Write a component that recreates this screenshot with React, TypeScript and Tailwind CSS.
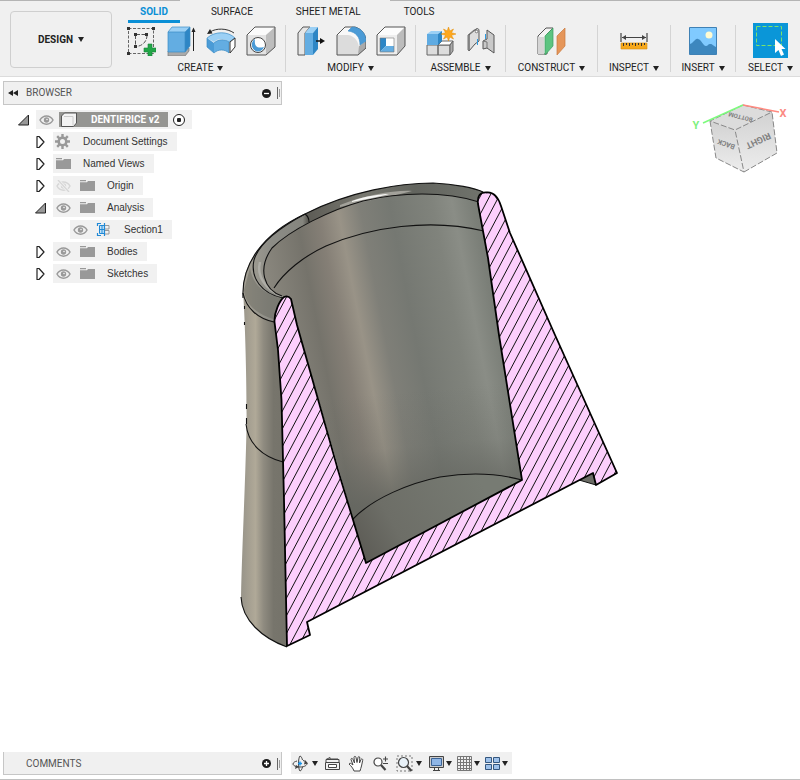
import type { ReactNode } from "react";

function Caret() {
  return (
    <svg width="6" height="5" viewBox="0 0 6 5" className="shrink-0" aria-hidden="true">
      <path d="M0 0h6L3 5z" fill="#222" />
    </svg>
  );
}

/* ---------- toolbar icons (30 x 30) ---------- */

function ToolIcon({ children }: { children: ReactNode }) {
  return (
    <svg width="30" height="30" viewBox="0 0 30 30" fill="none" strokeLinejoin="round" aria-hidden="true">
      {children}
    </svg>
  );
}

const icons = {
  sketch: (
    <ToolIcon>
      <path d="M2.500 2.500h25v25h-25z" stroke="#666" strokeDasharray="3 1.500" />
      <path d="M9.500 9v11M10 8.500h10M21 9c0 6-4 11-11 11.500" stroke="#555" strokeDasharray="4 1.500" />
      <path d="M1 1h3v3H1zM26 1h3v3h-3zM1 26h3v3H1zM8 7h3v3H8zM19 7h3v3h-3zM8 19h3v3H8z" fill="#333" />
      <path d="M22 18h4v4h4v4h-4v4h-4v-4h-4v-4h4z" fill="#22a547" stroke="#14843a" strokeWidth="0.6" />
    </ToolIcon>
  ),
  extrude: (
    <ToolIcon>
      <path d="M2 25l3-3h18v3l-4 5H2z" fill="#aaa" stroke="#777" strokeWidth="0.7" />
      <path d="M2 6l4-5h18l-5 5z" fill="#9bd0f5" />
      <path d="M2 6h17v20H2z" fill="#63ade2" />
      <path d="M19 6l5-5v19l-5 6z" fill="#2e86c5" />
      <path d="M2 6l4-5h18v19l-5 6H2zM2 6h17v20M19 6l5-5" stroke="#3b8cc6" strokeWidth="0.7" />
      <path d="M27.500 4v21" stroke="#222" />
      <path d="M25.500 6l2-4.500 2 4.500z" fill="#222" />
    </ToolIcon>
  ),
  revolve: (
    <ToolIcon>
      <path d="M1 12c8-7 21-7 28 0l-6 4c-4-4-11-4-15 0z" fill="#9bd0f5" />
      <path d="M1 12l7 5v10l-7-6z" fill="#4b9bd6" />
      <path d="M8 17c4-4 11-4 15-1v11c-4-4-11-4-15 0z" fill="#63ade2" />
      <path d="M1 12c8-7 21-7 28 0l-6 4v11c-4-4-11-4-15 0l-7-6zM8 17c4-4 11-4 15-1" stroke="#3b8cc6" strokeWidth="0.7" />
      <path d="M24 16l5-4v9l-5 6z" fill="#fff" stroke="#333" />
      <path d="M4 6c6-4 17-4 24 1" stroke="#333" />
      <path d="M1 8l3-5 2.500 4.500z" fill="#222" />
    </ToolIcon>
  ),
  hole: (
    <ToolIcon>
      <path d="M1 9l8-8h20l-9 8z" fill="#fbfbfb" />
      <path d="M1 9h19v20H1z" fill="#e3e3e3" />
      <path d="M20 9l9-8v20l-9 8z" fill="#bdbdbd" />
      <path d="M1 9l8-8h20v20l-9 8H1z" stroke="#555" />
      <circle cx="12" cy="19" r="7.500" fill="#fff" stroke="#444" />
      <path d="M9 13c-1 7 2 10 9 8-1 3-4 4.500-6.500 4.500C5 24.500 4 16 9 13z" fill="#4b9bd6" />
    </ToolIcon>
  ),
  pressPull: (
    <ToolIcon>
      <path d="M2 7l5-6h7l-5 6v22H2z" fill="#e6e6e6" stroke="#555" />
      <path d="M9 7l5-6h8l-5 6z" fill="#9bd0f5" />
      <path d="M9 7h8v22H9z" fill="#63ade2" />
      <path d="M17 7l5-6v22l-5 6z" fill="#2e86c5" />
      <path d="M20 15h5" stroke="#111" strokeWidth="1.500" />
      <path d="M24 12l5 3-5 3z" fill="#111" />
    </ToolIcon>
  ),
  fillet: (
    <ToolIcon>
      <path d="M1 9l8-8h10C26 3 30 9 30 15v7l-8 7H1z" fill="#f8f8f8" />
      <path d="M1 9h11c7 1 11 7 11 14v6H1z" fill="#dcdcdc" />
      <path d="M23 20l7-5v7l-8 7z" fill="#aaa" />
      <path d="M1 9l8-8h10c7 2 11 8 11 14v7l-8 7H1z" stroke="#555" />
      <path d="M12 5l4-4c9 0 14 7 14 14l-6 4c0-8-4-13-12-14z" fill="#4b9bd6" stroke="#3b8cc6" strokeWidth="0.6" />
    </ToolIcon>
  ),
  shell: (
    <ToolIcon>
      <path d="M1 9l8-8h20l-8 8z" fill="#fcfcfc" />
      <path d="M21 9l8-8v19l-8 9z" fill="#bcbcbc" />
      <path d="M1 9h20v20H1z" fill="#eee" />
      <path d="M1 9l8-8h20v19l-8 9H1z" stroke="#555" />
      <path d="M4 12h14v14H4z" fill="#fff" />
      <path d="M4 12h6v8l-6 6z" fill="#2e86c5" />
      <path d="M4 26l6-6h8v6z" fill="#63ade2" />
      <path d="M4 12h14v14H4z" stroke="#777" strokeWidth="0.6" />
    </ToolIcon>
  ),
  component: (
    <ToolIcon>
      <path d="M1 19h11v10H1zM12 19h12v10H12z" fill="#ddd" stroke="#666" />
      <path d="M12 19l4-4h11l-3 4z" fill="#fff" stroke="#666" />
      <path d="M24 19l3-4v10l-3 4z" fill="#aaa" stroke="#666" />
      <path d="M1 8l4-3h11l-4 3z" fill="#9bd0f5" />
      <path d="M1 8h11v11H1z" fill="#5fabe2" />
      <path d="M12 8l4-3v10l-4 4z" fill="#2e86c5" />
      <path
        d="M22.500 1l1.300 4 3.700-2-2 3.700 4.500 1.300-4.500 1.300 2 3.700-3.700-2-1.300 4-1.300-4-3.700 2 2-3.700-4.500-1.300 4.500-1.300-2-3.700 3.700 2z"
        fill="#ffa81e"
        stroke="#e38b00"
        strokeWidth="0.5"
      />
    </ToolIcon>
  ),
  joint: (
    <ToolIcon>
      <path d="M3 9l7-6c2-1 3 0 3 2v10l-4 3-6 7z" fill="#ddd" stroke="#555" />
      <path d="M3 9v16l-1-1V9l6-5h3" stroke="#777" />
      <circle cx="10.500" cy="5.500" r="1.300" fill="#fff" stroke="#555" strokeWidth="0.700" />
      <path d="M28 9l-7-5v9l-4 2v8l4-1 7 5z" fill="#c9c9c9" stroke="#555" />
      <path d="M17 15l4 1v6" stroke="#777" />
      <path d="M11.500 13v6M19.500 8v5" stroke="#2e9be0" />
    </ToolIcon>
  ),
  plane: (
    <ToolIcon>
      <path d="M1 10l8-8h7l-6 6v20H1z" fill="#f4f4f4" stroke="#555" />
      <path d="M1 11h6v17H1z" fill="#d5d5d5" />
      <path d="M8 10l8-8v18l-8 9z" fill="#5cc480" stroke="#3b9c5e" strokeWidth="0.700" />
      <path d="M20 10l8-8v18l-8 9z" fill="#e5965a" stroke="#c87a3d" strokeWidth="0.700" />
    </ToolIcon>
  ),
  measure: (
    <ToolIcon>
      <path d="M2 7v9M28 7v9M3 11.500h24" stroke="#444" strokeWidth="1.200" />
      <path d="M3 11.500l4-2.500v5zM27 11.500L23 9v5z" fill="#444" />
      <path d="M2 17h26v6H2z" fill="#f6a81c" stroke="#d98d0a" strokeWidth="0.600" />
      <path d="M4.500 17v3M7.500 17v2M10.500 17v3M13.500 17v2M16.500 17v3M19.500 17v2M22.500 17v3M25.500 17v2" stroke="#333" />
    </ToolIcon>
  ),
  insert: (
    <ToolIcon>
      <path d="M1.500 1.500h27v27h-27z" fill="#80caff" stroke="#3f81b5" />
      <path d="M2 18c4-1 5-6 8-5 4 1 5 7 8 7 2 0 2-2 4-2 3 0 3 2 6 3v7H2z" fill="#3d87be" />
      <circle cx="21" cy="9" r="3.500" fill="#fffbd2" />
    </ToolIcon>
  ),
  select: (
    <svg width="35" height="35" viewBox="0 0 35 35" fill="none" aria-hidden="true">
      <path d="M0 0h35v35H0z" fill="#0a96d8" />
      <path d="M3.500 3.500h25v19h-25z" stroke="#7be36a" strokeDasharray="4 2" />
      <path d="M22 16v14l3.500-3 2.500 6 3-1.500-2.500-5.500h4z" fill="#fff" />
    </svg>
  ),
};

interface ToolGroupProps {
  label: string;
  tools: { name: string; icon: ReactNode }[];
  className: string;
}

function ToolGroup({ label, tools, className }: ToolGroupProps) {
  return (
    <div className={`flex shrink-0 items-start ${className}`}>
      <div className="flex min-w-0 grow flex-col items-center gap-[2px]">
        <div className="flex h-[35px] items-center">
          {tools.map((tool) => (
            <button key={tool.name} type="button" aria-label={tool.name} className="flex w-10 items-center justify-center">
              {tool.icon}
            </button>
          ))}
        </div>
        <button type="button" className="flex h-4 items-center gap-1 whitespace-nowrap">
          {label}
          <Caret />
        </button>
      </div>
      <span className="mt-[2px] h-[47px] w-px bg-[#d4d4d4]" />
    </div>
  );
}

const tabs = ["SOLID", "SURFACE", "SHEET METAL", "TOOLS"];

function Ribbon() {
  return (
    <header className="overflow-hidden border-b border-[#dcdcdc] bg-[#f0f0f0]">
      <div className="flex h-px">
        <span className="w-[180px] bg-[#b4b4b4]" />
        <span className="w-[210px]" />
        <span className="grow bg-[#b4b4b4]" />
      </div>
      <div className="flex h-[75px]">
        <button
          type="button"
          className="mt-[10px] ml-[10px] flex h-[57px] w-[102px] shrink-0 items-center justify-center gap-[5px] rounded border border-[#cfcfcf] font-bold"
        >
          DESIGN
          <Caret />
        </button>
        <div className="flex flex-col">
          <nav className="ml-4 flex h-[22px] gap-[19px]">
            {tabs.map((tab, i) => (
              <button
                key={tab}
                type="button"
                className={
                  i === 0
                    ? "border-b-3 border-[#0a8fd6] px-3 pt-[3px] font-bold text-[#0a8fd6]"
                    : "border-b-3 border-transparent px-3 pt-[3px] whitespace-nowrap"
                }
              >
                {tab}
              </button>
            ))}
          </nav>
          <div className="ml-1 flex">
            <ToolGroup
              label="CREATE"
              className="w-[170px]"
              tools={[
                { name: "Create Sketch", icon: icons.sketch },
                { name: "Extrude", icon: icons.extrude },
                { name: "Revolve", icon: icons.revolve },
                { name: "Hole", icon: icons.hole },
              ]}
            />
            <ToolGroup
              label="MODIFY"
              className="w-[130px]"
              tools={[
                { name: "Press Pull", icon: icons.pressPull },
                { name: "Fillet", icon: icons.fillet },
                { name: "Shell", icon: icons.shell },
              ]}
            />
            <ToolGroup
              label="ASSEMBLE"
              className="w-[90px]"
              tools={[
                { name: "New Component", icon: icons.component },
                { name: "Joint", icon: icons.joint },
              ]}
            />
            <ToolGroup label="CONSTRUCT" className="w-[92px]" tools={[{ name: "Offset Plane", icon: icons.plane }]} />
            <ToolGroup label="INSPECT" className="w-[73px]" tools={[{ name: "Measure", icon: icons.measure }]} />
            <ToolGroup label="INSERT" className="w-[65px]" tools={[{ name: "Decal", icon: icons.insert }]} />
            <ToolGroup label="SELECT" className="w-[70px]" tools={[{ name: "Select", icon: icons.select }]} />
          </div>
        </div>
      </div>
    </header>
  );
}

/* ---------- browser tree ---------- */

function Eye({ off = false }: { off?: boolean }) {
  const color = off ? "#d6d6d6" : "#999";
  return (
    <svg width="15" height="12" viewBox="0 0 15 12" fill="none" aria-hidden="true">
      <path d="M1 6c3-5.500 10-5.500 13 0-3 5.500-10 5.500-13 0z" stroke={color} strokeWidth="1.500" />
      <circle cx="7.500" cy="6" r="2.700" fill={color} />
      <circle cx="8" cy="5.500" r="0.800" fill="#f1f1f1" />
      {off && <path d="M2 0l11 12" stroke="#f1f1f1" strokeWidth="3" />}
      {off && <path d="M2 0l11 12" stroke={color} strokeWidth="1.300" />}
    </svg>
  );
}

function Folder() {
  return (
    <svg width="16" height="13" viewBox="0 0 16 13" aria-hidden="true">
      <path d="M1 1h6v1.300H1zM1 3.300h7l1-1.300h7v10H1z" fill="#999" />
    </svg>
  );
}

function Gear() {
  return (
    <svg width="15" height="15" viewBox="0 0 15 15" fill="none" aria-hidden="true">
      <circle cx="7.500" cy="7.500" r="3.800" stroke="#999" strokeWidth="2.600" />
      <path
        d="M7.500 0v3M7.500 12v3M0 7.500h3M12 7.500h3M2.200 2.200l2.100 2.100M10.700 10.700l2.100 2.100M2.200 12.800l2.100-2.100M10.700 4.300l2.100-2.100"
        stroke="#999"
        strokeWidth="2.400"
      />
    </svg>
  );
}

function SectionIcon() {
  return (
    <svg width="15" height="15" viewBox="0 0 15 15" fill="none" aria-hidden="true">
      <path d="M3.500 3.500h5v8h-5zM3.500 7.500h5M6 3v9" fill="#c4e3f8" stroke="#2089d6" />
      <path d="M5 1.500H1.500V4M1.500 11v2.500H5M8.500 1v13" stroke="#2089d6" strokeWidth="1.200" />
      <path d="M9 3.500h4v3.500H9M9 8.500h4V12H9" stroke="#999" />
    </svg>
  );
}

function Expander({ open }: { open: boolean }) {
  return (
    <svg width="12" height="14" viewBox="0 0 12 14" aria-hidden="true">
      {open ? (
        <path d="M0.500 12L10.500 2v10z" fill="#999" stroke="#222" />
      ) : (
        <path d="M2 1.500v11h2l5-5.500-5-5.500z" fill="#fff" stroke="#222" strokeWidth="1.200" strokeLinejoin="round" />
      )}
    </svg>
  );
}

interface TreeNode {
  label: string;
  icon: ReactNode;
  open?: boolean;
  eye?: "on" | "off";
  leaf?: boolean;
}

const nodes: TreeNode[] = [
  { label: "Document Settings", icon: <Gear /> },
  { label: "Named Views", icon: <Folder /> },
  { label: "Origin", icon: <Folder />, eye: "off" },
  { label: "Analysis", icon: <Folder />, eye: "on", open: true },
  { label: "Section1", icon: <SectionIcon />, eye: "on", leaf: true },
  { label: "Bodies", icon: <Folder />, eye: "on" },
  { label: "Sketches", icon: <Folder />, eye: "on" },
];

function Grip() {
  return (
    <span className="flex items-center gap-px">
      <span className="h-3 w-px bg-[#666]" />
      <span className="h-2 w-px bg-[#999]" />
    </span>
  );
}

function RoundButton({ name, plus = false }: { name: string; plus?: boolean }) {
  return (
    <button type="button" aria-label={name}>
      <svg width="9" height="9" viewBox="0 0 9 9" aria-hidden="true">
        <circle cx="4.500" cy="4.500" r="4.500" fill="#1c1c1c" />
        <path d={plus ? "M2 4.500h5M4.500 2v5" : "M2 4.500h5"} stroke="#fff" strokeWidth="1.300" />
      </svg>
    </button>
  );
}

function BrowserPanel() {
  return (
    <aside className="col-start-1 row-start-1 ml-[3px] w-[279px] justify-self-start pt-1">
      <div className="flex h-6 items-center border border-[#c6c6c6] bg-[#f0f0f0] pr-px text-[#555]">
        <button type="button" aria-label="Collapse browser" className="w-[22px] pl-1">
          <svg width="10" height="6" viewBox="0 0 10 6" aria-hidden="true">
            <path d="M5 0v6L0 3zM10 0v6L5 3z" fill="#222" />
          </svg>
        </button>
        <h2 className="grow">BROWSER</h2>
        <span className="flex items-center gap-[6px]">
          <RoundButton name="Minimize browser" />
          <Grip />
        </span>
      </div>

      <ul className="mt-[5px] flex flex-col gap-[3px] font-['Liberation_Sans',Arial,sans-serif] text-[#333]">
        <li className="flex h-[19px] items-center pl-[15px]">
          <button type="button" aria-label="Collapse DENTIFRICE v2" className="w-[18px]">
            <Expander open />
          </button>
          <div className="flex h-full items-center gap-[5px] bg-[#f1f1f1] px-[3px]">
            <Eye />
            <span className="flex h-[15px] items-center bg-[#959592] pr-[9px] font-[Roboto,sans-serif] font-bold text-white">
              <svg width="20" height="15" viewBox="0 0 20 15" aria-hidden="true">
                <path d="M2.500 4l3-3h12v10l-3 3.500h-12z" fill="#f3f3f3" stroke="#555" />
                <path d="M5 4.500h9v9" stroke="#ccc" fill="none" />
              </svg>
              <span className="pl-3">DENTIFRICE v2</span>
            </span>
            <input
              type="radio"
              defaultChecked
              aria-label="Activate DENTIFRICE v2"
              className="mr-1 size-3 appearance-none rounded-full border border-[#222] bg-[radial-gradient(circle,#222_0_2px,#fff_2.5px)]"
            />
          </div>
        </li>
        {nodes.map((node) => (
          <li key={node.label} className={node.leaf ? "flex h-[19px] items-center pl-[67px]" : "flex h-[19px] items-center pl-8"}>
            {!node.leaf && (
              <button type="button" aria-label={`Toggle ${node.label}`} className="w-[18px]">
                <Expander open={!!node.open} />
              </button>
            )}
            <div className="flex h-full items-center bg-[#f1f1f1] pr-[9px]">
              {node.eye && (
                <span className="w-6 pl-[3px]">
                  <Eye off={node.eye === "off"} />
                </span>
              )}
              <span className="w-6 pl-[2px]">{node.icon}</span>
              <span className="pl-1.5">{node.label}</span>
            </div>
          </li>
        ))}
      </ul>
    </aside>
  );
}

/* ---------- canvas ---------- */

const SECTION =
  "M287 646L284 500L281.500 400L278 350L274.500 322C274 312 280 300 284 297Q288 295 291 299L297 325L338 470L366 563L522 480L499 335L488 258L478 204C477 196 480 192 487 192.500C494 192 498 197 501 206L510 233L555 335L617 473L596 485L593 473L307 622L310 635Z";

const INNER_WALL =
  "M282 296C264 290 257 269 272 248C290 230 330 210 363 201C400 192 445 191 479 202L522 481L366 563L297 325L291 299Z";

// hatch lines y = c - 1.89x, 17.7 apart vertically
const hatchLines = Array.from({ length: 48 }, (_, i) => {
  const c = 1139.4 + 17.7 * (i - 18);
  return `M${((c - 660) / 1.89).toFixed(1)} 660L${((c - 180) / 1.89).toFixed(1)} 180`;
}).join("");

function Model() {
  return (
    <svg
      viewBox="230 175 400 480"
      className="col-start-1 row-start-1 mt-[98px] ml-[60px] h-[480px] w-[400px] justify-self-center"
      fill="none"
      role="img"
      aria-label="Section view of the model"
    >
      <defs>
        <linearGradient id="inner" gradientUnits="userSpaceOnUse" x1="270" y1="300" x2="512" y2="253">
          <stop offset="0" stopColor="#8a877e" />
          <stop offset="0.170" stopColor="#75736b" />
          <stop offset="0.260" stopColor="#857f76" />
          <stop offset="0.340" stopColor="#999387" />
          <stop offset="0.430" stopColor="#7f7f78" />
          <stop offset="0.550" stopColor="#757872" />
          <stop offset="0.720" stopColor="#80837c" />
          <stop offset="0.800" stopColor="#8a8d86" />
          <stop offset="0.880" stopColor="#7b7f78" />
          <stop offset="1" stopColor="#6f726c" />
        </linearGradient>
        <linearGradient id="depth" gradientUnits="userSpaceOnUse" x1="420" y1="390" x2="430" y2="500">
          <stop offset="0" stopColor="#63655f" stopOpacity="0" />
          <stop offset="0.500" stopColor="#63655f" stopOpacity="0.200" />
          <stop offset="1" stopColor="#63655f" stopOpacity="0.850" />
        </linearGradient>
        <linearGradient id="outer" gradientUnits="userSpaceOnUse" x1="242" y1="0" x2="287" y2="0">
          <stop offset="0" stopColor="#99958a" />
          <stop offset="0.300" stopColor="#b0a998" />
          <stop offset="0.480" stopColor="#8f8b80" />
          <stop offset="0.700" stopColor="#77756c" />
          <stop offset="1" stopColor="#75736a" />
        </linearGradient>
        <linearGradient id="rim" gradientUnits="userSpaceOnUse" x1="243" y1="0" x2="482" y2="0">
          <stop offset="0" stopColor="#a5a195" />
          <stop offset="0.120" stopColor="#8c8c86" />
          <stop offset="0.250" stopColor="#85857e" />
          <stop offset="0.270" stopColor="#5d5c56" />
          <stop offset="0.500" stopColor="#77776f" />
          <stop offset="0.720" stopColor="#62645e" />
          <stop offset="1" stopColor="#70736c" />
        </linearGradient>
        <linearGradient id="floor" gradientUnits="userSpaceOnUse" x1="360" y1="550" x2="480" y2="480">
          <stop offset="0" stopColor="#5d5c56" />
          <stop offset="0.300" stopColor="#6d6e67" />
          <stop offset="1" stopColor="#777b73" />
        </linearGradient>
        <clipPath id="section">
          <path d={SECTION} />
        </clipPath>
      </defs>

      {/* outer wall */}
      <path
        d="M243 290C245 320 247 380 246.500 430C245 490 242 550 241 597C242 620 262 638 287 647L292 500L290 320L284 297L262 270Z"
        fill="url(#outer)"
      />
      {/* rim */}
      <path
        d="M243 292C242 262 265 233 305 214C350 191 400 183 433 183C455 184 475 188 484 192L479 203L470 300L284 298L275 322C255 316 244 306 243 292Z"
        fill="url(#rim)"
      />
      {/* rounded shading under the lip */}
      <path d="M250 268C253 286 265 294 283 299L276 320C256 314 245 304 244 290Z" fill="#64635c" opacity="0.450" />
      <path d="M260 262C256 276 266 290 282 296" stroke="#aeada6" strokeWidth="2.500" />
      {/* inner wall */}
      <path d={INNER_WALL} fill="url(#inner)" />
      <path d={INNER_WALL} fill="url(#depth)" />
      <path d="M340 205C365 195 395 190 412 191C395 196 368 200 340 207Z" fill="#a3a29b" />
      <path d="M352 201C366 196 380 194 389 194C380 197 365 199 352 202Z" fill="#f5f5f3" />
      {/* floor */}
      <path d="M353 519C373 498 410 483 440 477C470 472 500 474 522 480L366 563Z" fill="url(#floor)" />
      <path d="M579 480L593 472L596 485Z" fill="#6b6c65" stroke="#111" />

      <g stroke="#111" strokeWidth="1.100">
        <path d="M241 597C242 620 262 638 287 647" />
        <path d="M243 298C241 265 262 234 305 214C350 191 400 183 433 183C455 184 475 188 483 192" />
        <path d="M283 298C262 294 250 278 254 260C259 243 279 228 305 214" />
        <path d="M282 296C264 290 257 269 272 248C290 230 330 210 363 201C400 192 445 191 479 202" />
        <path d="M305 214C308 216 309 219 309 222" />
        <path d="M274 288C284 272 304 256 326 246C370 227 430 218 484 231" />
        <path d="M243 293C246 308 258 319 274 322" />
        <path d="M246 424C248 444 263 457 283 462" />
        <path d="M353 519C373 498 410 483 440 477C470 472 500 474 522 480" />
        <path d="M244.500 306v3M244.500 322v3M246.500 404v5M246.500 418v6" />
      </g>
      <path d={SECTION} fill="#fccffc" />
      <path d={hatchLines} clipPath="url(#section)" stroke="#111" />
      <path d={SECTION} stroke="#000" strokeWidth="1.800" strokeLinejoin="round" />
    </svg>
  );
}

function ViewCube() {
  return (
    <svg
      viewBox="690 98 104 80"
      className="col-start-1 row-start-1 mt-[21px] mr-[6px] h-[80px] w-[104px] justify-self-end"
      fill="none"
      role="img"
      aria-label="View cube"
    >
      <defs>
        <linearGradient id="face" x1="0" y1="0" x2="0" y2="1">
          <stop offset="0" stopColor="#d2d2d2" />
          <stop offset="1" stopColor="#ededed" />
        </linearGradient>
      </defs>
      <path d="M743 105L772 112L735 130L710 121Z" fill="#dcdcdc" />
      <path d="M710 121L735 130L744 172L716 158Z" fill="url(#face)" />
      <path d="M735 130L772 112L777 153L744 172Z" fill="url(#face)" />
      <path
        d="M743 105L772 112L735 130L710 121ZM710 121L716 158L744 172L735 130M744 172L777 153L772 112"
        stroke="#888"
        strokeDasharray="6 2"
      />
      <path d="M743 105L703 123" stroke="#7dfb7d" strokeWidth="1.500" />
      <path d="M743 105L779 112" stroke="#ff8a80" strokeWidth="1.500" />
      <g fontFamily="Roboto, sans-serif" fontWeight="bold" textAnchor="middle">
        <text x="696" y="129" fontSize="11" fill="#7df07d">Y</text>
        <text x="783" y="117" fontSize="11" fill="#fb8a84">X</text>
        <g fill="#808080">
          <text transform="translate(757 138) rotate(155)" fontSize="9">RIGHT</text>
          <text transform="translate(727 142) rotate(200)" fontSize="7">BACK</text>
          <text transform="translate(741 115) rotate(-166)" fontSize="6">BOTTOM</text>
        </g>
      </g>
    </svg>
  );
}

/* ---------- bottom bar ---------- */

function NavIcon({ children }: { children: ReactNode }) {
  return (
    <svg width="17" height="17" viewBox="0 0 17 17" fill="none" stroke="#444" className="shrink-0" aria-hidden="true">
      {children}
    </svg>
  );
}

const navTools = [
  {
    name: "Orbit",
    menu: true,
    className: "w-7 gap-[3px]",
    icon: (
      <NavIcon>
        <path d="M5 6C3 6.500 1 7.500 1 9c0 1.500 3 3 7 3 5 0 7-2 7-3.500S13 6 11 5.500M8 1C6 3 6 14 8 16c1 0 2-2 2.500-4M8 1c1 0 2 2 2.500 4" />
        <path d="M13 5l3 3.500-4 1zM3 14l1-4 3 2z" fill="#444" stroke="none" />
        <path d="M8 6.500v4M6 8.500h4" stroke="#1993e8" strokeWidth="1.500" />
      </NavIcon>
    ),
  },
  {
    name: "Look At",
    className: "w-6 pl-1",
    icon: (
      <NavIcon>
        <path d="M1.500 7.500h14v7h-14zM2 7V4.500h13V7" />
        <path d="M4.500 9.500h8v3h-8z" fill="#fff" />
        <path d="M2 4.500l4-2v1.500h8" />
      </NavIcon>
    ),
  },
  {
    name: "Pan",
    className: "w-6 pl-1",
    icon: (
      <NavIcon>
        <path
          d="M6 16c-1-3-3-5-5-7 1-1.500 2-.500 4 1L3 4.500c0-1.500 1.500-1.500 2 0L6.500 8 6 2.500c0-1.500 1.800-1.500 2 0L9 7.500l1-5c.300-1.500 2-1 1.800.500L11.500 8l1.500-3.500c.700-1.200 2-.500 1.700.800L13.500 11c-.500 2-1 3-1.500 5z"
          fill="#fff"
        />
      </NavIcon>
    ),
  },
  {
    name: "Zoom",
    className: "w-6 pl-1",
    icon: (
      <NavIcon>
        <circle cx="6" cy="7" r="4" fill="#fff" strokeWidth="1.200" />
        <path d="M9 10l4.500 5" strokeWidth="2.200" />
        <path d="M11 4h5M13.500 1.500v5M11 8.500h5" strokeWidth="1.100" />
      </NavIcon>
    ),
  },
  {
    name: "Zoom Window",
    menu: true,
    className: "w-8 gap-[3px] pl-1",
    icon: (
      <NavIcon>
        <path d="M1 1h15v15H1z" strokeDasharray="2 2" stroke="#777" />
        <circle cx="7.500" cy="7.500" r="5" fill="#e8f1f8" strokeWidth="1.200" />
        <path d="M11 11l4.500 5" strokeWidth="2.200" />
      </NavIcon>
    ),
  },
  {
    name: "Display Settings",
    menu: true,
    className: "w-7 justify-end gap-px",
    icon: (
      <NavIcon>
        <path d="M1.500 1.500h14v11h-14z" fill="#ccc" />
        <path d="M3.500 3.500h10v7h-10z" fill="#8fb6e6" stroke="#3c6497" />
        <path d="M5 15.500h7M6.500 13v2M10.500 13v2" />
      </NavIcon>
    ),
  },
  {
    name: "Grid and Snaps",
    menu: true,
    className: "w-7 justify-end gap-px",
    icon: (
      <NavIcon>
        <path d="M1.500 1.500h14v14h-14zM4.500 1v15M7.500 1v15M10.500 1v15M13.500 1v15M1 4.500h15M1 7.500h15M1 10.500h15M1 13.500h15" stroke="#777" />
      </NavIcon>
    ),
  },
  {
    name: "Viewports",
    menu: true,
    className: "w-7 justify-end gap-px",
    icon: (
      <NavIcon>
        <path d="M1.500 2.500h6v5h-6zM9.500 2.500h6v5h-6zM1.500 9.500h6v5h-6zM9.500 9.500h6v5h-6z" fill="#9ec1ea" stroke="#34577f" />
      </NavIcon>
    ),
  },
];

function BottomBar() {
  return (
    <footer className="flex items-start gap-[9px] border-b border-[#c0c0c0] pt-px pb-1 pl-[3px]">
      <section className="flex h-[23px] w-[279px] shrink-0 items-center border-x border-b border-[#c6c6c6] bg-[#f0f0f0] pt-px pr-px pl-[22px] text-[#555]">
        <h2 className="grow">COMMENTS</h2>
        <span className="flex items-center gap-[6px]">
          <RoundButton name="Expand comments" plus />
          <Grip />
        </span>
      </section>
      <div className="flex h-[22px] shrink-0 bg-[#f0f0f0] pr-1 pl-px">
        {navTools.map((tool) => (
          <button key={tool.name} type="button" aria-label={tool.name} className={`flex items-center ${tool.className}`}>
            {tool.icon}
            {tool.menu && <Caret />}
          </button>
        ))}
      </div>
    </footer>
  );
}

export default function App() {
  return (
    <div className="flex min-h-screen flex-col bg-white font-[Roboto,sans-serif] text-[10px] leading-4 text-[#222]">
      <Ribbon />
      <main className="grid grow items-start overflow-hidden">
        <Model />
        <BrowserPanel />
        <ViewCube />
      </main>
      <BottomBar />
    </div>
  );
}
